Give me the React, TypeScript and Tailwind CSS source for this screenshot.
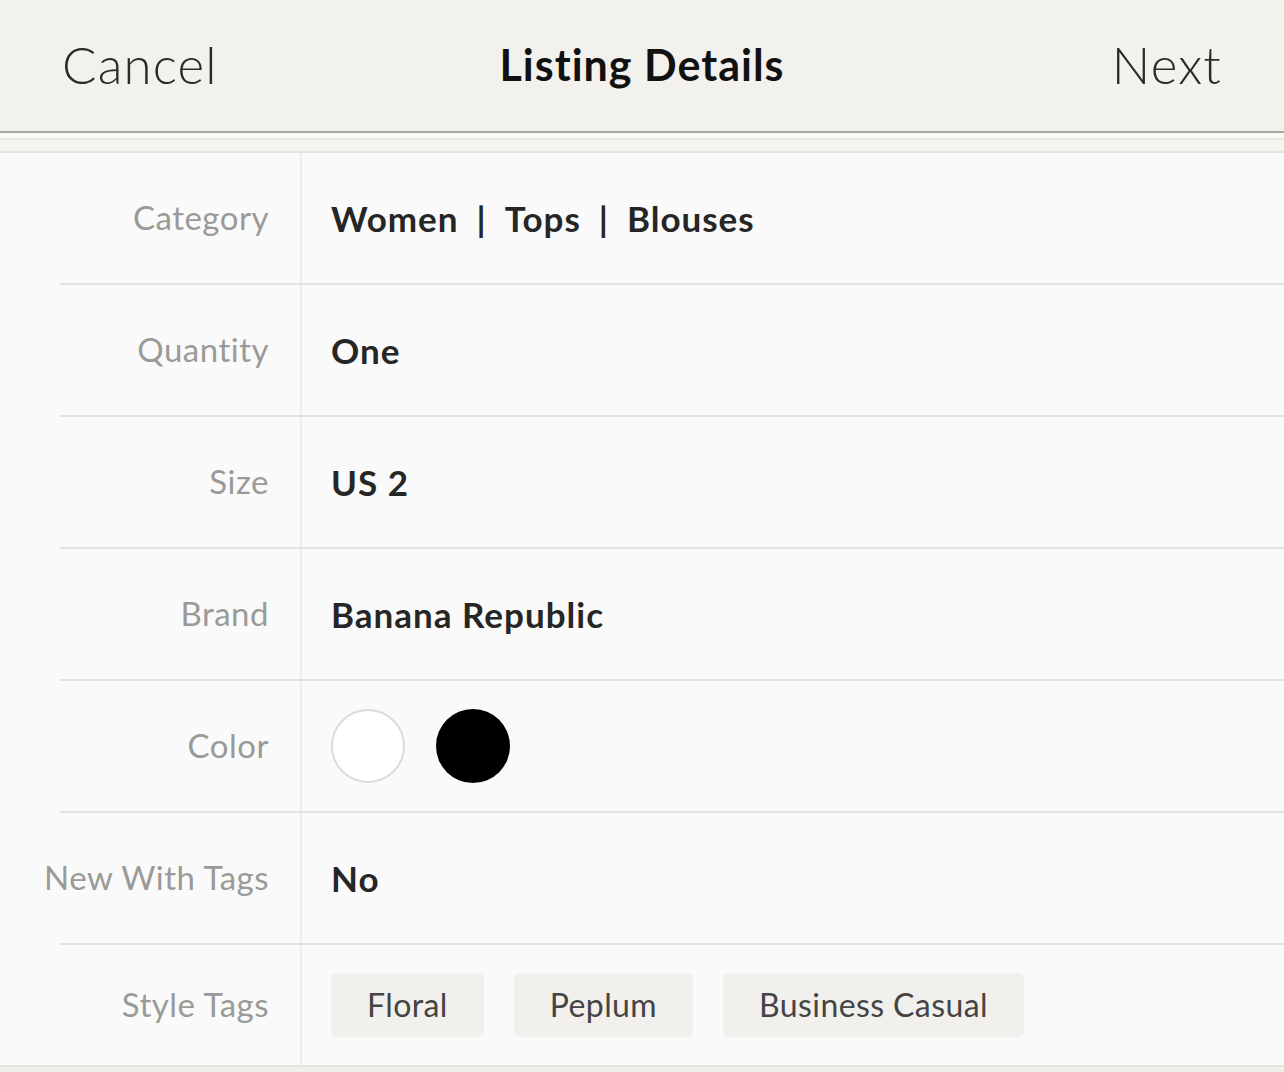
const rows = [
  { label: "Category", kind: "category" },
  { label: "Quantity", kind: "text", value: "One" },
  { label: "Size", kind: "text", value: "US 2" },
  { label: "Brand", kind: "text", value: "Banana Republic" },
  { label: "Color", kind: "color" },
  { label: "New With Tags", kind: "text", value: "No" },
  { label: "Style Tags", kind: "tags" },
];

const tags = ["Floral", "Peplum", "Business Casual"];

function Value({ kind, value }: { kind: string; value?: string }) {
  if (kind === "category") {
    return (
      <p className="text-[35px] font-bold tracking-[1px] text-[#262626]">
        Women<span className="mx-[18px]">|</span>Tops<span className="mx-[18px]">|</span>Blouses
      </p>
    );
  }
  if (kind === "color") {
    return (
      <div className="flex items-center gap-[31px]">
        <span className="block h-[74px] w-[74px] rounded-full border-2 border-[#dcdcdc] bg-white" />
        <span className="block h-[74px] w-[74px] rounded-full bg-black" />
      </div>
    );
  }
  if (kind === "tags") {
    return (
      <div className="flex items-center gap-[30px]">
        {tags.map((tag) => (
          <span key={tag} className="flex h-[64px] items-center rounded-[5px] bg-[#f2f0ed] px-[36px] text-[32px] tracking-[0.4px] text-[#444444]">
            {tag}
          </span>
        ))}
      </div>
    );
  }
  return <p className="text-[35px] font-bold tracking-[1px] text-[#262626]">{value}</p>;
}

export default function App() {
  return (
    <div className="h-[1072px] w-[1284px] overflow-hidden bg-[#fafafa] font-['Lato',sans-serif]">
      <header className="flex h-[133px] items-center border-b-2 border-[#a8a8a6] bg-[#f3f1ee] px-[62px]">
        <div className="flex flex-1 justify-start">
          <button className="text-[51px] font-light tracking-[1.2px] text-[#2b2b2b]">Cancel</button>
        </div>
        <h1 className="text-[43px] font-bold tracking-[1px] text-[#111111]">Listing Details</h1>
        <div className="flex flex-1 justify-end">
          <button className="text-[51px] font-light tracking-[1.2px] text-[#2b2b2b]">Next</button>
        </div>
      </header>
      <div className="h-[20px] border-b-2 border-[#e4e3e0] bg-[#f5f4f1]">
        <div className="h-[7px] border-b-2 border-[#e8e7e4] bg-[#fafaf8]" />
      </div>
      <div>
        {rows.map((row, i) => (
          <div key={row.label}>
            {i > 0 && <div className="ml-[60px] h-[2px] bg-[#e2e2e2]" />}
            <div className={`flex ${i === rows.length - 1 ? "h-[120px]" : "h-[130px]"}`}>
              <div className="flex w-[300px] shrink-0 items-center justify-end pr-[31px]">
                <span className="text-[33px] tracking-[0.5px] text-[#9a9a98]">{row.label}</span>
              </div>
              <div className="flex flex-1 items-center border-l-2 border-[#ececec] pl-[29px]">
                <Value kind={row.kind} value={row.value} />
              </div>
            </div>
          </div>
        ))}
      </div>
      <div className="h-[2px] bg-[#e6e4e1]" />
      <div className="h-[10px] bg-[#f0eeeb]" />
    </div>
  );
}
